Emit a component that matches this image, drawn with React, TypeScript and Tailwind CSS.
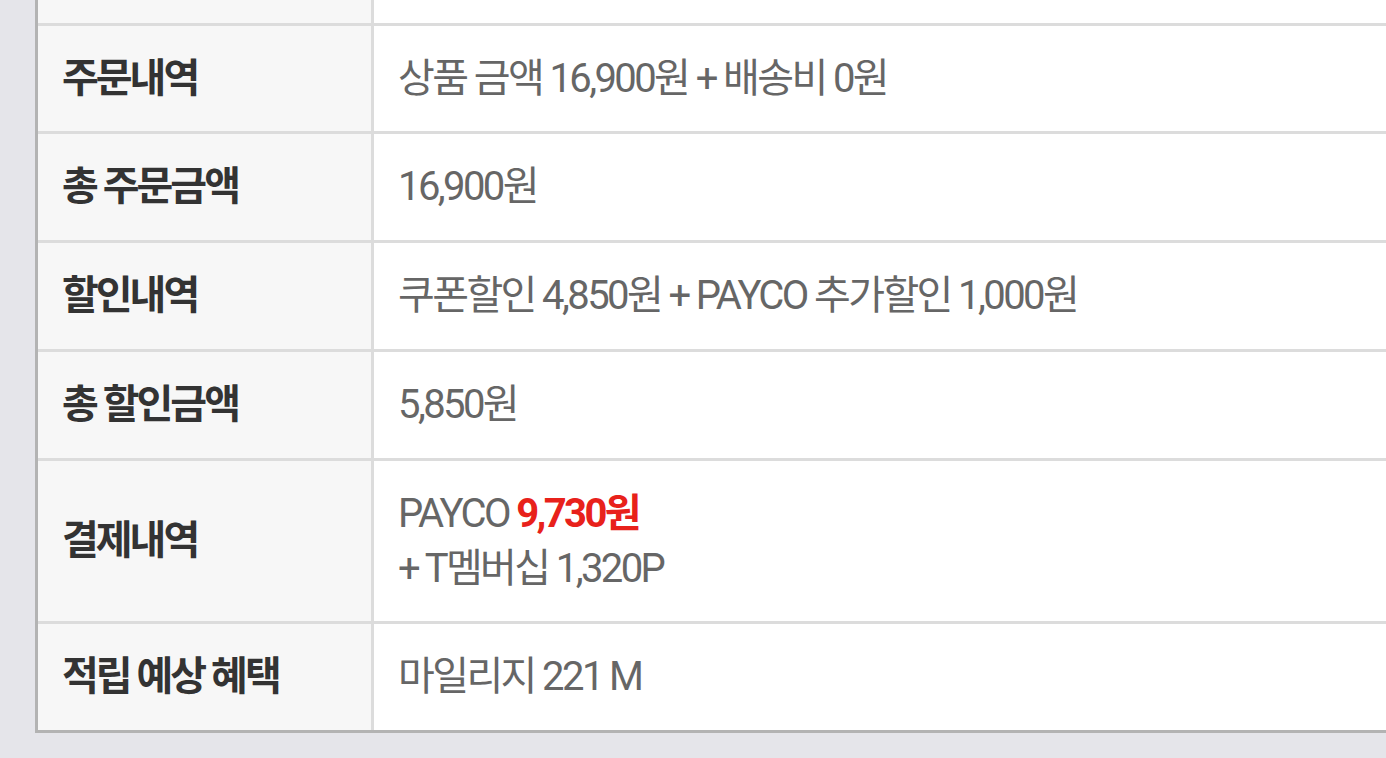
import React from "react";

const rows: { label: string; value: React.ReactNode; h: string }[] = [
  { label: "주문내역", value: "상품 금액 16,900원 + 배송비 0원", h: "h-[108px]" },
  { label: "총 주문금액", value: "16,900원", h: "h-[109px]" },
  { label: "할인내역", value: "쿠폰할인 4,850원 + PAYCO 추가할인 1,000원", h: "h-[109px]" },
  { label: "총 할인금액", value: "5,850원", h: "h-[109px]" },
  {
    label: "결제내역",
    value: (
      <div className="flex flex-col leading-[55px]">
        <span>
          PAYCO <span className="font-bold text-[#e8211b]">9,730원</span>
        </span>
        <span>+ T멤버십 1,320P</span>
      </div>
    ),
    h: "h-[163px]",
  },
  { label: "적립 예상 혜택", value: "마일리지 221 M", h: "h-[106px]" },
];

export default function App() {
  return (
    <div
      className="w-[1386px] h-[758px] overflow-hidden bg-[#e5e5ea] pl-[35px]"
      style={{ fontFamily: "Roboto, 'Noto Sans CJK KR', sans-serif" }}
    >
      <div className="w-[1400px] border-l-[3px] border-b-[3px] border-[#b3b3b3] bg-white">
        <div className="flex h-[26px] border-b-[3px] border-[#dcdcdc]">
          <div className="w-[336px] bg-[#f7f7f7] border-r-[3px] border-[#dcdcdc]" />
          <div className="flex-1 bg-white" />
        </div>
        {rows.map((r, i) => (
          <div
            key={i}
            className={`flex ${r.h} ${i < rows.length - 1 ? "border-b-[3px] border-[#dcdcdc]" : ""}`}
          >
            <div className="w-[336px] shrink-0 bg-[#f7f7f7] border-r-[3px] border-[#dcdcdc] flex items-center pl-[24px] text-[40px] font-bold text-[#333] tracking-[-3px]">
              {r.label}
            </div>
            <div className="flex-1 bg-white flex items-center pl-[24px] text-[40px] text-[#666] tracking-[-2.6px]">
              {r.value}
            </div>
          </div>
        ))}
      </div>
    </div>
  );
}
